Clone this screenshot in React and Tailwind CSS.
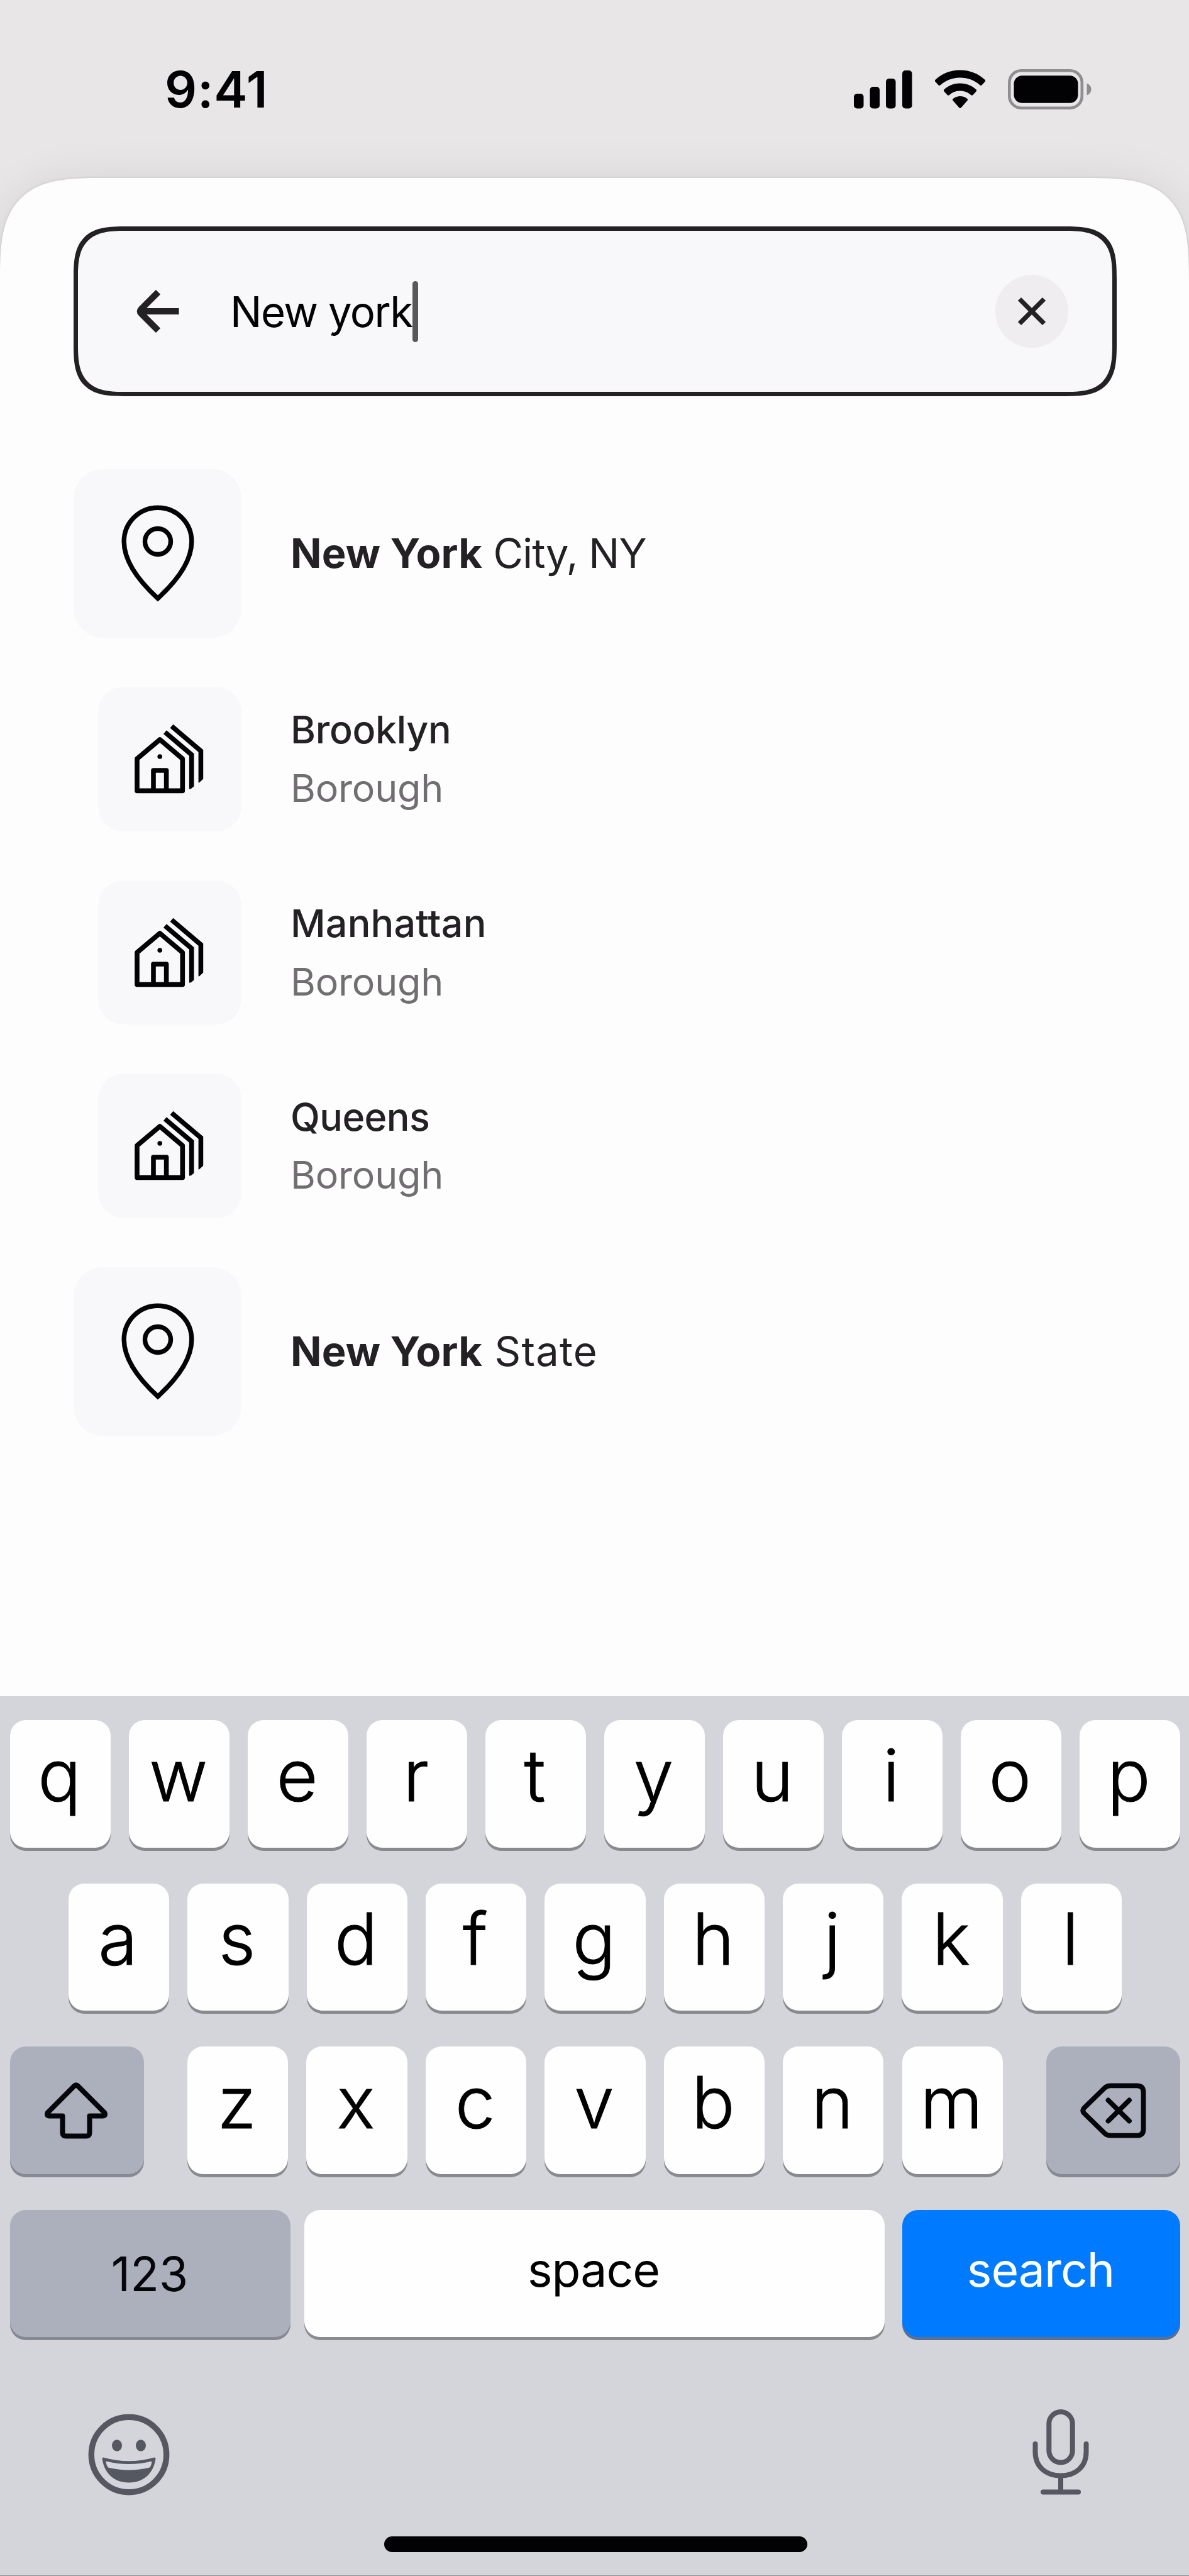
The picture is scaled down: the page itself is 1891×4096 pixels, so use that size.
import React from "react";

function SignalIcon() {
  return (
    <svg width="94" height="62" viewBox="0 0 94 62" fill="#020103">
      <rect x="1" y="38" width="15.5" height="23.5" rx="5" />
      <rect x="26.5" y="27" width="15.5" height="34.5" rx="5" />
      <rect x="52" y="14" width="15.5" height="47.5" rx="5" />
      <rect x="78" y="1" width="15.5" height="60.5" rx="5" />
    </svg>
  );
}

function WifiIcon() {
  return (
    <svg width="82" height="62" viewBox="0 0 82 62" fill="#020103">
      <path d="M41 0.5 C57 0.5 70.500 6.500 80.300 15.700 Q82 17.300 80.400 19 L75.600 24.200 Q74 25.800 72.400 24.300 C64 17 53.500 12.600 41 12.600 C28.500 12.600 18 17 9.600 24.300 Q8 25.800 6.400 24.200 L1.600 19 Q0 17.300 1.700 15.700 C11.500 6.500 25 0.500 41 0.500 Z" />
      <path d="M41 21.500 C51 21.500 59.500 25 66.300 31.200 Q68 32.700 66.400 34.400 L61.300 39.900 Q59.800 41.500 58.100 40 C53.500 36 47.800 33.600 41 33.600 C34.200 33.600 28.500 36 23.900 40 Q22.200 41.500 20.700 39.900 L15.600 34.400 Q14 32.700 15.700 31.200 C22.500 25 31 21.500 41 21.500 Z" />
      <path d="M41 42 C45.500 42 49.300 43.500 52.300 46 Q54 47.400 52.400 49.100 L42.500 60.300 Q41 61.800 39.500 60.300 L29.600 49.100 Q28 47.400 29.700 46 C32.700 43.500 36.500 42 41 42 Z" />
    </svg>
  );
}

function BatteryIcon() {
  return (
    <svg width="134" height="64" viewBox="0 0 134 64" fill="none">
      <rect x="2.300" y="2.300" width="115.500" height="59.400" rx="19" stroke="#8f8d8f" strokeWidth="4.600" />
      <rect x="9.500" y="10.200" width="102" height="43.600" rx="13" fill="#020103" />
      <path d="M125.500 22.500 C129.500 24 132.500 27.500 132.500 32 C132.500 36.500 129.500 40 125.500 41.500 Z" fill="#8f8d8f" />
    </svg>
  );
}

function BackArrow() {
  return (
    <svg width="68" height="68" viewBox="0 0 68 68" fill="none" stroke="#232124" strokeWidth="10.200">
      <path d="M67.500 34 H6" />
      <path d="M34.500 3.500 L7.500 30.500 Q4 34 7.500 37.500 L34.500 64.500" />
    </svg>
  );
}

function CloseIcon() {
  return (
    <svg width="46" height="46" viewBox="0 0 46 46" fill="none" stroke="#232124" strokeWidth="7.400">
      <path d="M3.500 3.500 L42.500 42.500 M42.500 3.500 L3.500 42.500" />
    </svg>
  );
}

function PinIcon() {
  return (
    <svg width="116" height="154" viewBox="0 0 116 154" fill="none" stroke="#020103" strokeWidth="7.400">
      <path d="M58 148.500 C28 121 4.200 89 4.200 58 A53.800 53.800 0 0 1 111.800 58 C111.800 89 88 121 58 148.500 Z" />
      <circle cx="58" cy="58" r="20.500" />
    </svg>
  );
}

function HousesIcon() {
  return (
    <svg width="112" height="112" viewBox="0 0 112 112" fill="none" stroke="#020103" strokeWidth="7.600">
      <path d="M4 55.500 L40.200 25 L76.300 55.500 V106.400 H4 Z" strokeLinejoin="round" />
      <path d="M30 106.400 V74 H50.600 V106.400" strokeLinejoin="round" />
      <circle cx="40.200" cy="52" r="3.800" fill="#020103" stroke="none" />
      <path d="M48.400 13.200 L90.700 49 V103.500" />
      <path d="M59 3.600 L105.400 43.100 V93.500" />
      <path d="M85 107 L98 96.500 V112 H85 Z M100 96 L112 85 V104 H100 Z" fill="#f8f7fa" stroke="none" />
    </svg>
  );
}

function ShiftIcon() {
  return (
    <svg width="104" height="90" viewBox="0 0 104 90" fill="none" stroke="#05060a" strokeWidth="8" strokeLinejoin="round">
      <path d="M48.800 6.200 Q52 3 55.200 6.200 L97.300 48.300 Q99.500 53.500 94.500 53.500 H73.500 V80 Q73.500 85.500 68 85.500 H36 Q30.500 85.500 30.500 80 V53.500 H9.500 Q4.500 53.500 6.700 48.300 Z" />
    </svg>
  );
}

function BackspaceIcon() {
  return (
    <svg width="105" height="88" viewBox="0 0 105 88" fill="none" stroke="#05060a" strokeWidth="7.800" strokeLinecap="round">
      <path d="M48 4.300 H90 Q100.500 4.300 100.500 14.500 V73.500 Q100.500 83.700 90 83.700 H48 Q42.500 83.700 38.500 79.700 L6.500 48.500 Q2 44 6.500 39.500 L38.500 8.300 Q42.500 4.300 48 4.300 Z" />
      <path d="M44.500 27.500 L78 60.500 M78 27.500 L44.500 60.500" />
    </svg>
  );
}

function EmojiIcon() {
  return (
    <svg width="130" height="130" viewBox="0 0 130 130" fill="none">
      <circle cx="65" cy="65" r="59.700" stroke="#555860" strokeWidth="9.400" />
      <ellipse cx="46" cy="50.500" rx="8" ry="9.200" fill="#555860" />
      <ellipse cx="84" cy="50.500" rx="8" ry="9.200" fill="#555860" />
      <path d="M24.500 69.500 Q65 81 105.500 69.500 Q107.800 69.500 107.300 72.500 C104 95 88 109.500 65 109.500 C42 109.500 26 95 22.700 72.500 Q22.200 69.500 24.500 69.500 Z" fill="#555860" />
      <path d="M28.500 75.500 Q65 84.500 101.500 75.500 Q101 82 98 85.500 Q65 93.500 32 85.500 Q29 82 28.500 75.500 Z" fill="#d5d7df" />
    </svg>
  );
}

function MicIcon() {
  return (
    <svg width="90" height="138" viewBox="0 0 90 138" fill="none" stroke="#555860" strokeWidth="8" strokeLinecap="round">
      <rect x="26.300" y="5" width="37.400" height="80.500" rx="18.700" />
      <path d="M4.500 56 V69 C4.500 92 21 106.500 45 106.500 C69 106.500 85.500 92 85.500 69 V56" />
      <path d="M45 107 V132.500 M17 132.500 H73" />
    </svg>
  );
}

const places = [
  { match: "New York", rest: "City, NY", spacing: "tracking-[-0.800px]" },
  { name: "Brooklyn", kind: "Borough", spacing: "tracking-[-0.300px]" },
  { name: "Manhattan", kind: "Borough", spacing: "tracking-[0.200px]" },
  { name: "Queens", kind: "Borough", spacing: "tracking-[-0.600px]" },
  { match: "New York", rest: "State", spacing: "tracking-[1.200px]" },
];

function Place({ place }) {
  if (place.match) {
    return (
      <div className="flex h-[268px] items-center gap-[78px]">
        <div className="flex h-[268px] w-[267px] shrink-0 items-center justify-center rounded-[46px] bg-[#f8f7fa]">
          <PinIcon />
        </div>
        <p className="whitespace-pre text-[65px] leading-[80px] text-[#232124]">
          <span className="font-bold tracking-[0.200px]">{place.match}</span>
          <span className={place.spacing}> {place.rest}</span>
        </p>
      </div>
    );
  }
  return (
    <div className="flex h-[229.700px] items-center gap-[78px] pl-[39px]">
      <div className="flex h-[229.700px] w-[228px] shrink-0 items-center justify-center rounded-[40px] bg-[#f8f7fa]">
        <HousesIcon />
      </div>
      <div className="text-[61px] leading-[92.500px]">
        <p className={`font-[450] text-[#232124] ${place.spacing}`}>{place.name}</p>
        <p className="text-[#706e70] tracking-[-0.200px]">{place.kind}</p>
      </div>
    </div>
  );
}

function Key({ label }) {
  return (
    <div className="flex h-[202.700px] w-[160.300px] items-center justify-center rounded-[25px] bg-[#fefefe] pb-[26px] pr-[3px] text-[114px] font-light leading-none text-black shadow-[0_5px_0_#898a8e] [-webkit-text-stroke:1px_#000]">
      {label}
    </div>
  );
}

function Letters({ row }) {
  return row.split("").map((letter) => <Key key={letter} label={letter} />);
}

export default function App() {
  return (
    <div className="flex h-[4096px] w-[1891px] flex-col overflow-hidden bg-[#e8e6e7] font-['Inter',sans-serif]">
      <div className="flex h-[283px] shrink-0 items-center justify-between pl-[262px] pr-[154px]">
        <div className="text-[80px] font-semibold leading-none tracking-[0.800px] text-[#020103]">9:41</div>
        <div className="flex items-center">
          <SignalIcon />
          <div className="w-[35px]" />
          <WifiIcon />
          <div className="w-[35px]" />
          <BatteryIcon />
        </div>
      </div>

      <div className="flex h-[2414px] shrink-0 flex-col rounded-t-[112px] bg-[#fefdfe] px-[117px] pt-[77px] shadow-[0_0_4px_rgba(0,0,0,0.12),0_0_70px_rgba(0,0,0,0.08)] supports-[corner-shape:squircle]:rounded-t-[168px] supports-[corner-shape:squircle]:[corner-shape:superellipse(1.68)]">
        <div className="flex h-[270px] w-[1659px] shrink-0 items-center rounded-[62px] border-[7px] border-[#232124] bg-[#f8f7fa] pl-[93px] pr-[70px] supports-[corner-shape:squircle]:rounded-[84px] supports-[corner-shape:squircle]:[corner-shape:superellipse(1.6)]">
          <BackArrow />
          <span className="ml-[81px] text-[67px] leading-none tracking-[-1.500px] text-[#020103]">New york</span>
          <div className="h-[97px] w-[9px] rounded-full bg-[#5a575a]" />
          <div className="ml-auto flex h-[116px] w-[116px] items-center justify-center rounded-full bg-[#efedef]">
            <CloseIcon />
          </div>
        </div>

        <div className="mt-[116px] flex flex-col gap-[78px]">
          {places.map((place, index) => (
            <Place key={index} place={place} />
          ))}
        </div>
      </div>

      <div className="flex grow flex-col bg-[#d4d5db] pl-4 pr-3.5 pt-[38px]">
        <div className="flex flex-col gap-[57px]">
          <div className="flex justify-between">
            <Letters row="qwertyuiop" />
          </div>
          <div className="flex justify-between px-[93px]">
            <Letters row="asdfghjkl" />
          </div>
          <div className="flex justify-between">
            <div className="flex h-[202.700px] w-[213px] items-center justify-center rounded-[25px] bg-[#acb0bd] pr-[3px] shadow-[0_5px_0_#868992]">
              <ShiftIcon />
            </div>
            <div className="flex w-[1297px] justify-between">
              <Letters row="zxcvbnm" />
            </div>
            <div className="flex h-[202.700px] w-[213px] items-center justify-center rounded-[25px] bg-[#acb0bd] shadow-[0_5px_0_#868992]">
              <BackspaceIcon />
            </div>
          </div>
          <div className="flex justify-between text-[75px] leading-none">
            <div className="flex h-[202px] w-[446px] items-center justify-center rounded-[25px] bg-[#acb0bd] pr-[2px] text-[#05060a] shadow-[0_5px_0_#868992]">
              123
            </div>
            <div className="ml-[-6px] flex h-[202px] w-[923px] items-center justify-center rounded-[25px] bg-[#fefefe] pb-[13px] pr-[3px] tracking-[-1px] text-black shadow-[0_5px_0_#898a8e]">
              space
            </div>
            <div className="flex h-[202px] w-[442px] items-center justify-center rounded-[25px] bg-[#007aff] pb-[13px] pr-[2px] tracking-[-1px] text-white shadow-[0_5px_0_#5b6f92]">
              search
            </div>
          </div>
        </div>

        <div className="mt-[114px] flex items-end justify-between pl-[124px] pr-[145px]">
          <EmojiIcon />
          <MicIcon />
        </div>
        <div className="ml-[595px] mt-[65px] h-[25px] w-[673px] rounded-full bg-[#020103]" />
      </div>
      <div className="h-px shrink-0 bg-[#ececee]" />
      <div className="h-px shrink-0 bg-[#7c7c7e]" />
    </div>
  );
}
